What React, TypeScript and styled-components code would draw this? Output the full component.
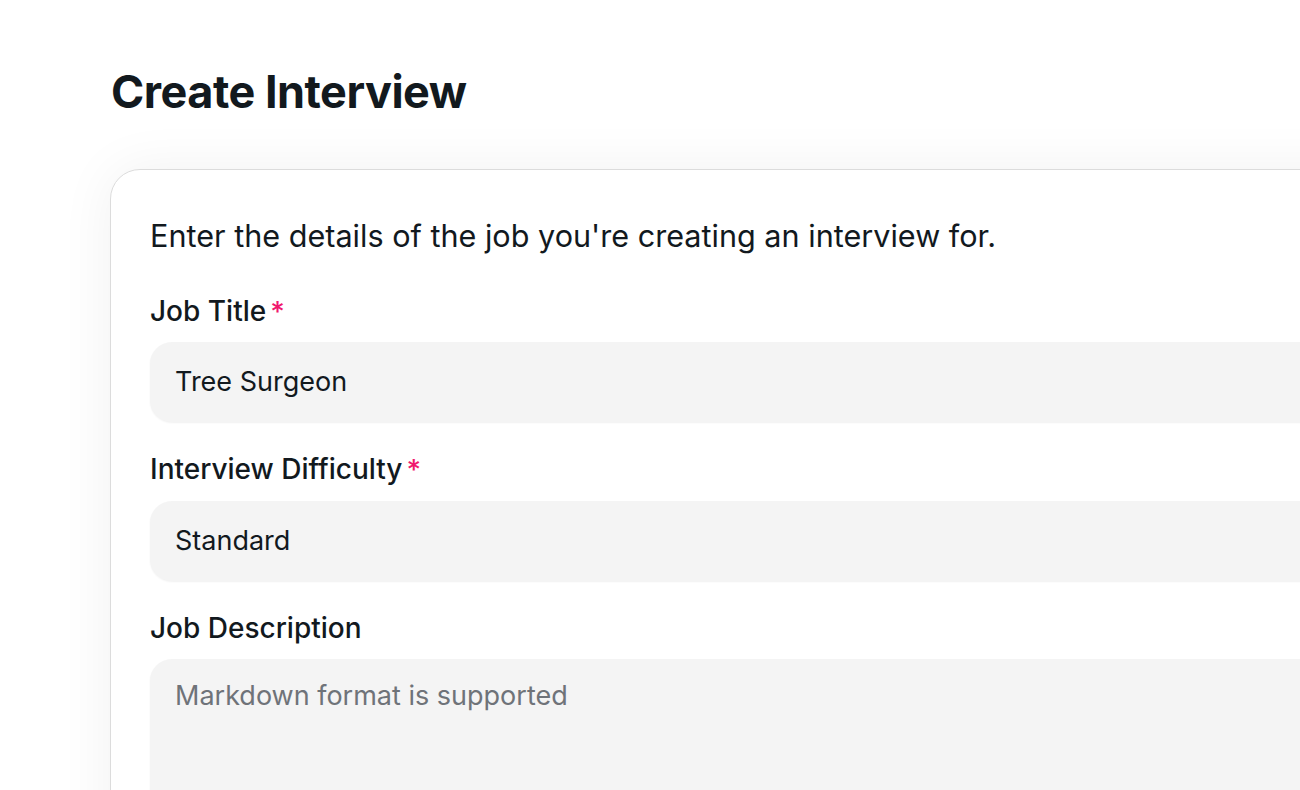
import React from 'react';
import styled, { createGlobalStyle } from 'styled-components';

const GlobalStyle = createGlobalStyle`
  html, body {
    margin: 0;
    padding: 0;
    background: #ffffff;
    overflow: hidden;
  }
  body {
    font-family: Inter, "Noto Sans", "Liberation Sans", sans-serif;
    color: #12191e;
  }
`;

const Page = styled.main`
  padding: 69px 0 0 111px;
  height: 790px;
  box-sizing: border-box;
`;

const Title = styled.h1`
  margin: 0 0 55px;
  font-size: 45px;
  line-height: 1;
  font-weight: 700;
  letter-spacing: -0.5px;
  color: #12191e;
`;

const Card = styled.section`
  width: 1300px;
  min-height: 700px;
  margin-left: -1px;
  padding: 48px 40px 0 39px;
  box-sizing: border-box;
  background: #ffffff;
  border: 1px solid #dcdcdc;
  border-radius: 30px;
  box-shadow: 0 0 55px rgba(0, 0, 0, 0.06);
`;

const Intro = styled.p`
  margin: 0 0 40px;
  font-size: 30.6px;
  line-height: 1.2;
  font-weight: 400;
`;

const Field = styled.div`
  margin-bottom: 31px;
`;

const Label = styled.label`
  display: flex;
  align-items: flex-start;
  gap: 4px;
  margin-bottom: 14px;
  font-size: 28px;
  line-height: 1.2;
  font-weight: 500;
`;

const Required = styled.span`
  color: #f0196e;
  font-size: 28px;
  line-height: 1;
  margin-top: 3px;
`;

const Control = styled.div<{ $tall?: boolean }>`
  display: flex;
  align-items: ${({ $tall }) => ($tall ? 'flex-start' : 'center')};
  height: ${({ $tall }) => ($tall ? '200px' : '80px')};
  padding: ${({ $tall }) => ($tall ? '21px 25px' : '0 25px')};
  box-sizing: border-box;
  background: #f4f4f4;
  border-radius: 22px;
  box-shadow: 0 1px 2px rgba(0, 0, 0, 0.06);
  font-size: 27px;
  line-height: 1.2;
`;

const Placeholder = styled.span`
  color: #6f7379;
`;

export default function App() {
  return (
    <>
      <GlobalStyle />
      <Page>
        <Title>Create Interview</Title>
        <Card>
          <Intro>Enter the details of the job you're creating an interview for.</Intro>
          <Field>
            <Label>
              Job Title<Required>*</Required>
            </Label>
            <Control>Tree Surgeon</Control>
          </Field>
          <Field>
            <Label>
              Interview Difficulty<Required>*</Required>
            </Label>
            <Control>Standard</Control>
          </Field>
          <Field>
            <Label>Job Description</Label>
            <Control $tall>
              <Placeholder>Markdown format is supported</Placeholder>
            </Control>
          </Field>
        </Card>
      </Page>
    </>
  );
}
